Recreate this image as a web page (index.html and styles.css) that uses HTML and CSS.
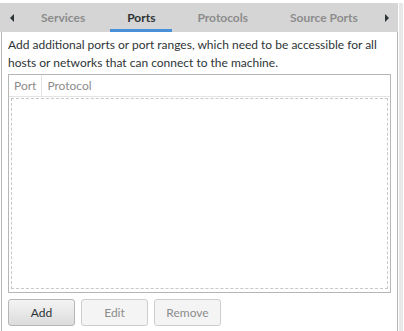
FILE: index.html
```html
<!DOCTYPE html>
<html lang="en">
<head>
    <meta charset="UTF-8">
    <title>Firewall - Ports</title>
    <link rel="stylesheet" href="styles.css">
</head>
<body>
    <div class="window">
        <div class="notebook">
            <!-- Tab strip -->
            <div class="tabs">
                <span class="arrow arrow-left"></span>
                <span class="tab">Services</span>
                <span class="tab active">Ports</span>
                <span class="tab">Protocols</span>
                <span class="tab">Source Ports</span>
                <span class="arrow arrow-right"></span>
            </div>

            <div class="page">
                <p class="info">Add additional ports or port ranges, which need to be accessible for all hosts or networks that can connect to the machine.</p>

                <div class="tree">
                    <div class="tree-header">
                        <span class="col col-port">Port</span>
                        <span class="col">Protocol</span>
                    </div>
                    <div class="tree-body"></div>
                </div>

                <div class="buttons">
                    <button class="btn">Add</button>
                    <button class="btn" disabled>Edit</button>
                    <button class="btn" disabled>Remove</button>
                </div>
            </div>
        </div>
        <div class="scrollbar"></div>
    </div>
</body>
</html>
```

FILE: styles.css
```css
body {
    margin: 0;
    font-family: Lato, sans-serif;
    font-size: 12px;
    color: #2e3436;
    background: #ffffff;
}
.window {
    display: flex;
    height: 331px;
    padding-top: 3px;
    box-sizing: border-box;
}
.notebook {
    width: 398px;
    display: flex;
    flex-direction: column;
}
.tabs {
    height: 29px;
    background: #d5d5d5;
    display: flex;
    align-items: stretch;
    gap: 8px;
}
.tab {
    color: #8c8c8c;
    font-weight: bold;
    white-space: nowrap;
    padding: 2px 17px 0 17px;
    display: flex;
    align-items: center;
    border-bottom: 3px solid transparent;
}
.tab.active {
    color: #2e3436;
    border-bottom-color: #4a90d9;
}
.arrow {
    width: 16px;
    padding-top: 1px;
    display: flex;
    align-items: center;
}
.arrow::before {
    content: "";
    border-top: 4px solid transparent;
    border-bottom: 4px solid transparent;
}
.arrow-left {
    justify-content: flex-end;
    padding-right: 2px;
    box-sizing: border-box;
}
.arrow-left::before {
    border-right: 4px solid #2e3436;
}
.arrow-right {
    width: 4px;
    margin-left: auto;
    margin-right: 9px;
}
.arrow-right::before {
    border-left: 4px solid #2e3436;
}
.page {
    flex: 1;
    border-left: 1px solid #b6b6b3;
    border-right: 1px solid #b6b6b3;
    margin-left: 1px;
    padding: 4px 6px 0 6px;
    display: flex;
    flex-direction: column;
}
.info {
    margin: 0 0 2px 0;
    line-height: 18px;
}
.tree {
    height: 219px;
    box-sizing: border-box;
    border: 1px solid #b6b6b3;
    display: flex;
    flex-direction: column;
}
.tree-header {
    height: 21px;
    flex-shrink: 0;
    display: flex;
    color: #8c8c8c;
    border-bottom: 1px solid #e4e4e4;
}
.col {
    padding: 0 5px;
    display: flex;
    align-items: center;
}
.col-port {
    border-right: 1px solid #e4e4e4;
}
.tree-body {
    flex: 1;
    margin: 1px 2px 3px 2px;
    border: 1px dashed #c8c8c8;
}
.buttons {
    display: flex;
    gap: 6px;
    margin-top: 6px;
}
.btn {
    width: 67px;
    height: 27px;
    font-family: inherit;
    font-size: 12px;
    color: #2e3436;
    border: 1px solid #b6b6b3;
    border-radius: 3px;
    background: linear-gradient(#f4f4f4, #dcdcdc);
}
.btn:disabled {
    color: #8c8c8c;
    background: #f4f4f4;
    border-color: #cdcdcd;
}
.scrollbar {
    width: 4px;
    margin-left: 1px;
    background: #e8e8e8;
}
```
